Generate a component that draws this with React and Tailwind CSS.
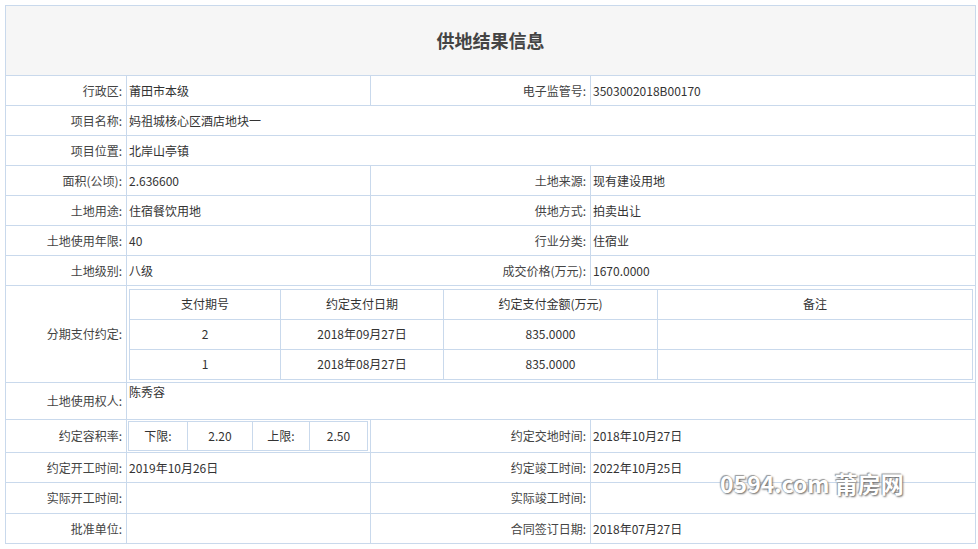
const B = "border border-[#c9d9ec]";
const L = `${B} text-right pr-1 text-[#444] w-[121px]`;
const V = `${B} pl-[2px] text-[#333]`;

export default function App() {
  return (
    <div className="relative w-[978px] h-[549px] bg-white pt-[5px] pl-[5px] text-[12px]" style={{ fontFamily: '"Noto Sans CJK SC", "Liberation Sans", sans-serif' }}>
      <table className="border-collapse w-[971px] table-fixed">
        <colgroup>
          <col className="w-[121px]" />
          <col className="w-[244px]" />
          <col className="w-[220px]" />
          <col />
        </colgroup>
        <tbody>
          <tr className="h-[70px]">
            <td colSpan={4} className={`${B} bg-[#f6f6f6] text-center text-[18px] font-bold text-[#444]`}>供地结果信息</td>
          </tr>
          <tr className="h-[30px]"><td className={L}>行政区:</td><td className={V}>莆田市本级</td><td className={L}>电子监管号:</td><td className={V}>3503002018B00170</td></tr>
          <tr className="h-[30px]"><td className={L}>项目名称:</td><td colSpan={3} className={V}>妈祖城核心区酒店地块一</td></tr>
          <tr className="h-[30px]"><td className={L}>项目位置:</td><td colSpan={3} className={V}>北岸山亭镇</td></tr>
          <tr className="h-[30px]"><td className={L}>面积(公顷):</td><td className={V}>2.636600</td><td className={L}>土地来源:</td><td className={V}>现有建设用地</td></tr>
          <tr className="h-[30px]"><td className={L}>土地用途:</td><td className={V}>住宿餐饮用地</td><td className={L}>供地方式:</td><td className={V}>拍卖出让</td></tr>
          <tr className="h-[30px]"><td className={L}>土地使用年限:</td><td className={V}>40</td><td className={L}>行业分类:</td><td className={V}>住宿业</td></tr>
          <tr className="h-[30px]"><td className={L}>土地级别:</td><td className={V}>八级</td><td className={L}>成交价格(万元):</td><td className={V}>1670.0000</td></tr>
          <tr className="h-[97px]">
            <td className={L}>分期支付约定:</td>
            <td colSpan={3} className={`${B} p-[2px]`}>
              <table className="w-[844px] border-collapse table-fixed text-center text-[#333]">
                <colgroup><col className="w-[151px]" /><col className="w-[163px]" /><col className="w-[214px]" /><col /></colgroup>
                <tbody>
                  <tr className="h-[30px]"><td className={B}>支付期号</td><td className={B}>约定支付日期</td><td className={B}>约定支付金额(万元)</td><td className={B}>备注</td></tr>
                  <tr className="h-[30px]"><td className={B}>2</td><td className={B}>2018年09月27日</td><td className={B}>835.0000</td><td className={B}></td></tr>
                  <tr className="h-[30px]"><td className={B}>1</td><td className={B}>2018年08月27日</td><td className={B}>835.0000</td><td className={B}></td></tr>
                </tbody>
              </table>
            </td>
          </tr>
          <tr className="h-[37px]"><td className={L}>土地使用权人:</td><td colSpan={3} className={`${V} align-top`}>陈秀容</td></tr>
          <tr className="h-[33px]">
            <td className={L}>约定容积率:</td>
            <td className={`${B} p-[1px]`}>
              <table className="border-collapse w-[240px] table-fixed text-center text-[#333]">
                <tbody><tr className="h-[29px]">
                  <td className={`${B} w-[59px]`}>下限:</td><td className={`${B} w-[65px]`}>2.20</td>
                  <td className={`${B} w-[57px]`}>上限:</td><td className={B}>2.50</td>
                </tr></tbody>
              </table>
            </td>
            <td className={L}>约定交地时间:</td><td className={V}>2018年10月27日</td>
          </tr>
          <tr className="h-[30px]"><td className={L}>约定开工时间:</td><td className={V}>2019年10月26日</td><td className={L}>约定竣工时间:</td><td className={V}>2022年10月25日</td></tr>
          <tr className="h-[31px]"><td className={L}>实际开工时间:</td><td className={V}></td><td className={L}>实际竣工时间:</td><td className={V}></td></tr>
          <tr className="h-[30px]"><td className={L}>批准单位:</td><td className={V}></td><td className={L}>合同签订日期:</td><td className={V}>2018年07月27日</td></tr>
        </tbody>
      </table>
      <div className="absolute left-[720px] top-[466px] text-[23px] font-bold text-white [text-shadow:1px_1px_2px_#666,-1px_-1px_1px_#999]">0594.com 莆房网</div>
    </div>
  );
}
